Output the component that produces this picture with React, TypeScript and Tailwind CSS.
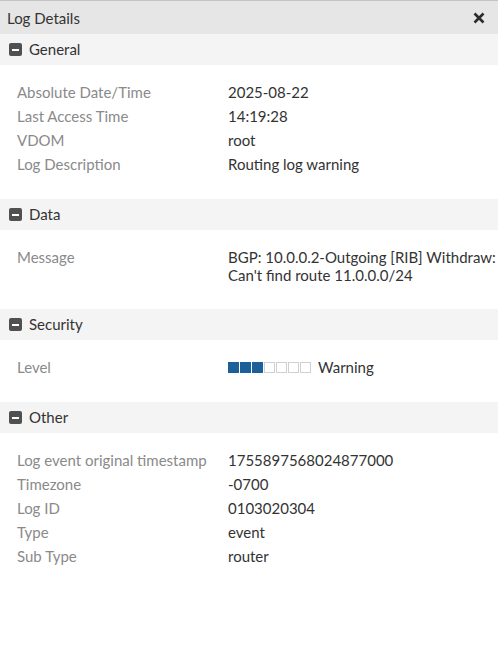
import React from 'react';

interface Row {
  label: string;
  value: React.ReactNode;
}

interface Section {
  title: string;
  rows: Row[];
  bodyClass: string;
}

function LevelBar({ level, total }: { level: number; total: number }) {
  return (
    <div className="flex items-center">
      <div className="flex gap-px">
        {Array.from({ length: total }).map((_, i) => (
          <span
            key={i}
            className={
              i < level
                ? 'h-[11px] w-[11px] bg-[#1d5f98]'
                : 'h-[11px] w-[11px] border border-[#d0d0d0] bg-white'
            }
          />
        ))}
      </div>
      <span className="ml-[7px]">Warning</span>
    </div>
  );
}

const sections: Section[] = [
  {
    title: 'General',
    bodyClass: 'pb-[23px] pt-[15px]',
    rows: [
      { label: 'Absolute Date/Time', value: '2025-08-22' },
      { label: 'Last Access Time', value: '14:19:28' },
      { label: 'VDOM', value: 'root' },
      { label: 'Log Description', value: 'Routing log warning' },
    ],
  },
  {
    title: 'Data',
    bodyClass: 'pb-[22px] pt-[15px]',
    rows: [
      {
        label: 'Message',
        value: "BGP: 10.0.0.2-Outgoing [RIB] Withdraw: Can't find route 11.0.0.0/24",
      },
    ],
  },
  {
    title: 'Security',
    bodyClass: 'pb-[23px] pt-[15px]',
    rows: [{ label: 'Level', value: <LevelBar level={3} total={7} /> }],
  },
  {
    title: 'Other',
    bodyClass: 'pb-[23px] pt-[15px]',
    rows: [
      { label: 'Log event original timestamp', value: '1755897568024877000' },
      { label: 'Timezone', value: '-0700' },
      { label: 'Log ID', value: '0103020304' },
      { label: 'Type', value: 'event' },
      { label: 'Sub Type', value: 'router' },
    ],
  },
];

function MinusIcon() {
  return (
    <span className="flex h-[13px] w-[13px] items-center justify-center rounded-[2px] bg-[#505050]">
      <span className="h-[2px] w-[7px] bg-white" />
    </span>
  );
}

export default function App() {
  return (
    <div
      className="h-[659px] w-[498px] bg-white text-[15px] text-[#333]"
      style={{ fontFamily: 'Lato, "Open Sans", sans-serif' }}
    >
      <div className="flex h-[34px] items-center justify-between border-t border-[#c4c4c4] bg-[#e6e6e6] pl-[7px] pr-[13px]">
        <span className="pt-px text-[#333]">Log Details</span>
        <svg width="12" height="12" viewBox="0 0 12 12">
          <path d="M1.5 1.5 L10.5 10.5 M10.5 1.5 L1.5 10.5" stroke="#2b2b2b" strokeWidth="2.6" />
        </svg>
      </div>

      {sections.map((section) => (
        <div key={section.title}>
          <div className="flex h-[31px] items-center gap-[7px] bg-[#f4f4f4] pl-[9px]">
            <MinusIcon />
            <span className="text-[#333]">{section.title}</span>
          </div>
          <div className={section.bodyClass}>
            {section.rows.map((row) => (
              <div key={row.label} className="flex py-[3px] leading-[18px]">
                <div className="w-[228px] shrink-0 pl-[17px] text-[#8a8a8a]">{row.label}</div>
                <div className="min-w-0 flex-1">{row.value}</div>
              </div>
            ))}
          </div>
        </div>
      ))}
    </div>
  );
}
